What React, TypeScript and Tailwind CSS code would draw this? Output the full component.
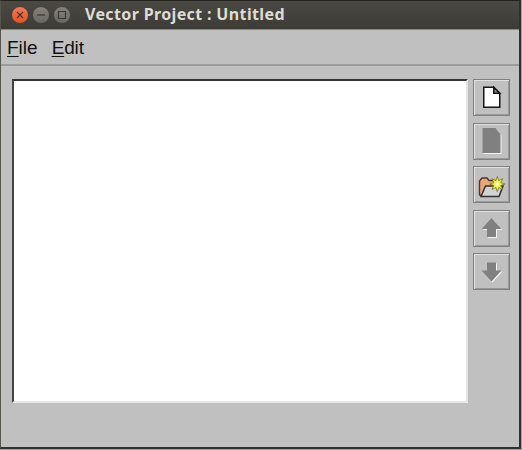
import React from "react";

const svgProps = { width: 32, height: 32, viewBox: "0 0 32 32" };

function ToolButton({ label, children }: { label: string; children: React.ReactNode }) {
  return (
    <button
      aria-label={label}
      className="flex h-[37px] w-[37px] items-center justify-center border border-[#808080] bg-[#c0c0c0] shadow-[inset_1px_1px_0_#e2e2e2,inset_-1px_-1px_0_#989898]"
    >
      {children}
    </button>
  );
}

function TitleButton({ close, children }: { close?: boolean; children: React.ReactNode }) {
  const tone = close
    ? "bg-linear-to-b from-[#f5794f] to-[#e9511f]"
    : "bg-linear-to-b from-[#85837c] to-[#6a6862]";
  return (
    <span className={`flex h-[18px] w-[18px] items-center justify-center rounded-full border border-[#45423c] ${tone}`}>
      <svg width="16" height="16" viewBox="0 0 16 16" fill="none" stroke="#3b3833" strokeWidth="1.2">
        {children}
      </svg>
    </span>
  );
}

export default function App() {
  return (
    <div className="h-[450px] w-[522px] overflow-hidden bg-[#a4a4a4]">
      <div className="flex h-[449px] w-[521px] flex-col border-t border-r-2 border-b-2 border-l border-t-[#22221f] border-r-[#303030] border-b-[#303030] border-l-[#55544f] bg-[#c0c0c0]">
        <header className="flex h-[29px] shrink-0 items-center border-b border-[#888883] bg-linear-to-b from-[#4b4943] to-[#3c3b36] pb-px pl-[10px]">
          <div className="flex gap-[3px]">
            <TitleButton close>
              <path d="M5 5l6 6M11 5l-6 6" />
            </TitleButton>
            <TitleButton>
              <path d="M4 8h8" />
            </TitleButton>
            <TitleButton>
              <path d="M4.5 4.5h7v7h-7z" />
            </TitleButton>
          </div>
          <h1 className="ml-[14px] whitespace-nowrap pb-[2px] font-['Noto_Sans',sans-serif] text-[16px] leading-[24px] font-bold tracking-[0.36px] text-[#dfdbd2]">
            Vector Project : Untitled
          </h1>
        </header>
        <nav className="flex h-[36px] shrink-0 items-center gap-[14px] border-b-2 border-[#9c9c9c] pt-[2px] pl-[6px] font-['Liberation_Sans',Arial,sans-serif] text-[19px] text-[#111]">
          <span><u className="underline-offset-2">F</u>ile</span>
          <span className="tracking-[-0.15px]"><u className="underline-offset-2">E</u>dit</span>
        </nav>
        <main className="flex pt-[13px] pl-[11px]">
          <div className="h-[324px] w-[456px] border-2 border-t-[#333] border-r-[#e4e4e4] border-b-[#e8e8e8] border-l-[#444] bg-white" />
          <div className="ml-[5px] flex h-[211px] flex-col justify-between">
            <ToolButton label="New">
              <svg {...svgProps}>
                <path d="M7.75 5.25h10l6 6v14h-16z" fill="#fff" stroke="#151515" strokeWidth="1.5" />
                <path d="M17.75 5.25v6h6z" fill="#888" stroke="#151515" strokeWidth="1.5" />
              </svg>
            </ToolButton>
            <ToolButton label="Document">
              <svg {...svgProps}>
                <path d="M7.5 4h13l5 6v19h-18z" fill="#f2f2f2" />
                <path d="M6.5 3h13l5 6v19h-18z" fill="#808080" />
              </svg>
            </ToolButton>
            <ToolButton label="Open">
              <svg {...svgProps}>
                <path d="M3.5 26V12L6 9h5l2 2.5h5l1 3v3L8.5 27z" fill="#e9a67b" stroke="#49382c" strokeWidth="1.4" />
                <path d="M5 27.5L9.5 17H27l-4 10.5z" fill="#cfd3d4" stroke="#303030" strokeWidth="1.5" />
                <path d="M21.3 7.5l1.4 4.2 4-2-2 4 4.2 1.4-4.2 1.4 2 4-4-2-1.4 4.2-1.4-4.2-4 2 2-4-4.2-1.4 4.2-1.4-2-4 4 2z" fill="#f5f34b" stroke="#77761d" strokeWidth=".8" />
                <circle cx="21.3" cy="15.1" r="1.7" fill="#ffffd8" />
              </svg>
            </ToolButton>
            <ToolButton label="Move up">
              <svg {...svgProps}>
                <path d="M16.5 7l10 11h-5.5v8h-9v-8H7z" fill="#f4f4f4" />
                <path d="M15.5 6l10 11H20v8h-9v-8H5.5z" fill="#808080" />
              </svg>
            </ToolButton>
            <ToolButton label="Move down">
              <svg {...svgProps}>
                <path d="M12 7.5h9v8h5.5l-10 11-9.5-11h5z" fill="#f4f4f4" />
                <path d="M11 6.5h9v8h5.5l-10 11-10-11H11z" fill="#808080" />
              </svg>
            </ToolButton>
          </div>
        </main>
      </div>
    </div>
  );
}
